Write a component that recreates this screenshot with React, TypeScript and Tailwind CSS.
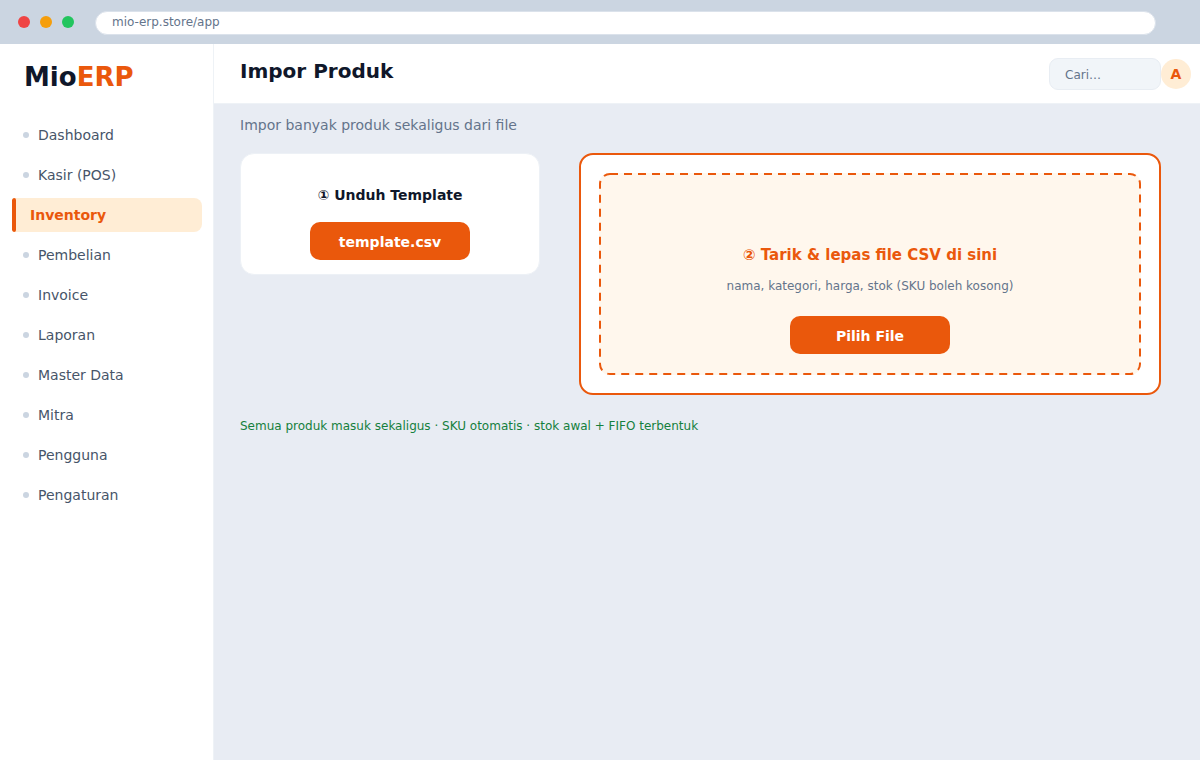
const navItems = [
  'Dashboard',
  'Kasir (POS)',
  'Inventory',
  'Pembelian',
  'Invoice',
  'Laporan',
  'Master Data',
  'Mitra',
  'Pengguna',
  'Pengaturan',
];

const activeItem = 'Inventory';

function BrowserBar() {
  return (
    <div className="flex h-11 items-center bg-[#cbd5e1] pr-11 pl-[18px]">
      <div className="flex gap-2.5">
        <span className="size-3 rounded-full bg-[#ef4444]" />
        <span className="size-3 rounded-full bg-[#f59e0b]" />
        <span className="size-3 rounded-full bg-[#22c55e]" />
      </div>
      <input
        type="text"
        aria-label="Alamat"
        defaultValue="mio-erp.store/app"
        className="mt-0.5 ml-[21px] h-6 min-w-0 flex-1 rounded-full border border-[#dbe2eb] bg-white px-4 pb-0.5 text-xs text-[#64748b] outline-none"
      />
    </div>
  );
}

function Sidebar() {
  return (
    <aside className="w-[214px] shrink-0 border-r border-[#eef2f6] bg-white px-3 pt-[17px]">
      <div className="px-3 text-[26px] leading-8 font-bold text-[#0f172a]">
        Mio<span className="text-[#ea580c]">ERP</span>
      </div>
      <nav aria-label="Menu utama" className="mt-[25px]">
        <ul className="flex flex-col gap-1.5 text-sm">
          {navItems.map((item) =>
            item === activeItem ? (
              <li key={item} className="-mr-px">
                <a
                  href="#"
                  aria-current="page"
                  className="flex h-[34px] items-center overflow-hidden rounded-l-xs rounded-r-lg bg-[#ffedd5] font-bold text-[#ea580c]"
                >
                  <span className="h-full w-1 rounded-xs bg-[#ea580c]" />
                  <span className="pl-3.5">{item}</span>
                </a>
              </li>
            ) : (
              <li key={item}>
                <a href="#" className="flex h-[34px] items-center gap-[9px] pl-[11px] text-[#475569]">
                  <span className="size-1.5 rounded-full bg-[#cbd5e1]" />
                  {item}
                </a>
              </li>
            ),
          )}
        </ul>
      </nav>
    </aside>
  );
}

function TopBar() {
  return (
    <header className="flex h-[60px] items-center justify-between border-b border-[#eef2f6] bg-white pr-[9px] pl-[26px]">
      <h1 className="pb-1.5 text-xl font-bold text-[#0f172a]">Impor Produk</h1>
      <div className="flex items-center">
        <input
          type="search"
          aria-label="Cari"
          placeholder="Cari…"
          className="h-8 w-[112px] rounded-[9px] border border-[#e8edf3] bg-[#f1f5f9] pt-0.5 pr-3 pl-[15px] text-xs text-[#64748b] outline-none placeholder:text-[#64748b]"
        />
        <button type="button" aria-label="Akun" className="size-[30px] rounded-full bg-[#ffedd5] text-sm font-bold text-[#ea580c]">
          A
        </button>
      </div>
    </header>
  );
}

function DashedOutline() {
  return (
    <svg aria-hidden="true" className="pointer-events-none absolute inset-0 size-full" fill="none">
      <rect
        x="1"
        y="1"
        rx="10"
        className="h-[calc(100%-2px)] w-[calc(100%-2px)] stroke-[#ea580c]"
        strokeWidth="2"
        strokeDasharray="8 6"
      />
    </svg>
  );
}

function ActionButton({ children }: { children: string }) {
  return (
    <button type="button" className="h-[38px] w-40 rounded-[10px] bg-[#ea580c] pt-0.5 text-sm font-bold text-white">
      {children}
    </button>
  );
}

export default function App() {
  return (
    <div className="flex min-h-screen flex-col bg-[#e8ecf3] font-['DejaVu_Sans',sans-serif]">
      <BrowserBar />
      <div className="flex flex-1">
        <Sidebar />
        <div className="min-w-0 flex-1">
          <TopBar />
          <main className="pt-[11px] pr-[39px] pl-[26px]">
            <p className="text-sm text-[#64748b]">Impor banyak produk sekaligus dari file</p>
            <div className="mt-[18px] flex items-start gap-[39px]">
              <section className="flex w-[300px] shrink-0 flex-col items-center gap-[17px] rounded-[14px] border border-[#edf1f6] bg-white pt-[31px] pb-3.5">
                <h2 className="text-sm font-bold text-[#0f172a]">① Unduh Template</h2>
                <ActionButton>template.csv</ActionButton>
              </section>
              <section className="min-w-0 flex-1 rounded-[14px] border-2 border-[#ea580c] bg-white p-[18px]">
                <div className="relative flex flex-col items-center rounded-[11px] bg-[#fff7ed] pt-[70px] pb-[21px]">
                  <DashedOutline />
                  <h2 className="text-[15px] leading-6 font-bold text-[#ea580c]">② Tarik &amp; lepas file CSV di sini</h2>
                  <p className="mt-[11px] mb-[22px] text-xs text-[#64748b]">nama, kategori, harga, stok (SKU boleh kosong)</p>
                  <ActionButton>Pilih File</ActionButton>
                </div>
              </section>
            </div>
            <p className="mt-[23px] text-xs text-[#15803d]">
              Semua produk masuk sekaligus · SKU otomatis · stok awal + FIFO terbentuk
            </p>
          </main>
        </div>
      </div>
    </div>
  );
}
